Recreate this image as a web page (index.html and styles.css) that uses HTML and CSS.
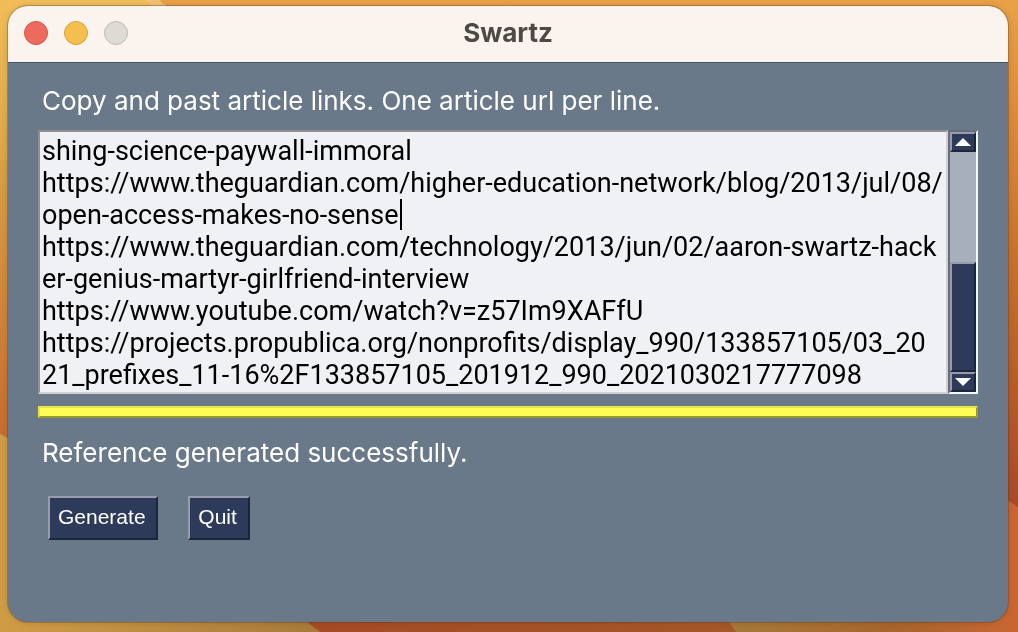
FILE: index.html
```html
<!DOCTYPE html>
<html lang="en">
<head>
<meta charset="utf-8">
<title>Swartz</title>
<link rel="stylesheet" href="styles.css">
</head>
<body>
<svg class="wallpaper" viewBox="0 0 1018 632" preserveAspectRatio="none" aria-hidden="true">
  <defs>
    <linearGradient id="gold" x1="0" y1="0" x2="0" y2="1"><stop offset="0" stop-color="#f2bd59"/><stop offset=".3" stop-color="#d9a044"/><stop offset="1" stop-color="#d29c45"/></linearGradient>
    <linearGradient id="amber" x1="0" y1="0" x2="0" y2="1"><stop offset="0" stop-color="#e9a146"/><stop offset=".4" stop-color="#c9722c"/><stop offset=".8" stop-color="#a84a27"/></linearGradient>
    <linearGradient id="dusk" x1="0" y1="0" x2="0" y2="1"><stop offset="0" stop-color="#d9a044"/><stop offset="1" stop-color="#c66a30"/></linearGradient>
    <linearGradient id="base" x1="0" y1="0" x2="1" y2="0"><stop offset="0" stop-color="#cf9c45"/><stop offset="1" stop-color="#a4773a"/></linearGradient>
    <linearGradient id="rust" x1="0" y1="0" x2="1" y2="0"><stop offset="0" stop-color="#a54b26"/><stop offset="1" stop-color="#a4602b"/></linearGradient>
    <linearGradient id="ember" gradientUnits="userSpaceOnUse" x1="720" y1="0" x2="1018" y2="0"><stop offset="0" stop-color="#a47a3a"/><stop offset=".6" stop-color="#a8642c"/><stop offset="1" stop-color="#c96633"/></linearGradient>
  </defs>
  <path fill="url(#gold)" d="M0 0H1018V632H0z"/>
  <path fill="url(#amber)" d="M160 0H1018V632H600z"/>
  <path fill="#f4c374" d="M145 0H158L170 8H155z"/>
  <path fill="url(#dusk)" d="M0 160H20V450L0 434z"/>
  <path fill="url(#base)" d="M0 434L20 444V610H340V632H0z"/>
  <path fill="url(#rust)" d="M302 618H1018V632H320z"/>
  <path fill="url(#ember)" d="M1000 495L1018 507V632H736L726 618H1000z"/>
</svg>
<main class="window">
  <header class="titlebar">
    <div class="lights">
      <button class="light close" aria-label="Close"></button>
      <button class="light minimize" aria-label="Minimize"></button>
      <button class="light zoom" aria-label="Zoom" disabled></button>
    </div>
    <h1 class="title">Swartz</h1>
  </header>
  <form class="content">
    <label class="label" for="links">Copy and past article links. One article url per line.</label>
    <div class="editor">
      <textarea class="links" id="links" rows="8" wrap="off" spellcheck="false">shing-science-paywall-immoral
https://www.theguardian.com/higher-education-network/blog/2013/jul/08/
open-access-makes-no-sense
https://www.theguardian.com/technology/2013/jun/02/aaron-swartz-hack
er-genius-martyr-girlfriend-interview
https://www.youtube.com/watch?v=z57Im9XAFfU
https://projects.propublica.org/nonprofits/display_990/133857105/03_20
21_prefixes_11-16%2F133857105_201912_990_2021030217777098</textarea>
      <span class="caret"></span>
      <div class="scrollbar">
        <button class="arrow" type="button" aria-label="Scroll up"><svg viewBox="0 0 16 8"><path fill="#fff" d="M8 0L16 8H0z"/></svg></button>
        <div class="track"></div>
        <div class="thumb"></div>
        <button class="arrow" type="button" aria-label="Scroll down"><svg viewBox="0 0 16 8"><path fill="#fff" d="M0 0H16L8 8z"/></svg></button>
      </div>
    </div>
    <div class="progress"></div>
    <p class="label status">Reference generated successfully.</p>
    <div class="actions">
      <button class="btn" type="button">Generate</button>
      <button class="btn" type="button">Quit</button>
    </div>
  </form>
</main>
</body>
</html>
```
FILE: styles.css
```css
* { box-sizing: border-box; }
body {
  margin: 0;
  min-height: 100vh;
  padding: 6px 10px 10px 8px;
  display: flex;
  background: #d29c45;
  font-family: Inter, "Liberation Sans", sans-serif;
}
.wallpaper { position: fixed; inset: 0; width: 100%; height: 100%; }
.window {
  position: relative;
  flex: 1;
  min-width: 0;
  display: flex;
  flex-direction: column;
  overflow: hidden;
  border-radius: 20px;
  background: #6a798a;
  box-shadow: 0 0 0 1px rgba(80, 50, 20, .3), 0 0 6px rgba(80, 40, 0, .2);
}
.titlebar {
  display: grid;
  grid-template-columns: 1fr auto 1fr;
  align-items: center;
  height: 57px;
  padding: 0 16px 2px;
  background: #fbf3ed;
  border-bottom: 1px solid #44566a;
}
.lights { display: flex; gap: 16px; }
.light { width: 24px; height: 24px; padding: 0; border: 1px solid; border-radius: 50%; }
.close { background: #ed6a5e; border-color: #d65548; }
.minimize { background: #f5bf4f; border-color: #d6a03c; }
.zoom { background: #dedad4; border-color: #bfbbb5; }
.title { margin: 0; font-size: 26px; line-height: 32px; font-weight: 700; color: #4d4945; }
.content { display: flex; flex-direction: column; padding: 22px 30px; }
.label { margin: 0; padding: 0 4px; font-size: 26px; line-height: 32px; color: #fff; }
.editor { position: relative; display: flex; margin-top: 13px; }
.links {
  flex: 1;
  min-width: 0;
  height: 264px;
  margin: 0;
  padding: 3px 2px;
  border: 2px solid;
  border-color: #8f8f91 #d0d0d4 #d0d0d4 #8f8f91;
  border-radius: 0;
  outline: 0;
  resize: none;
  overflow: hidden;
  background: #f0f1f5;
  color: #000;
  font: 27px/32px Roboto, "Liberation Sans", sans-serif;
}
.caret { position: absolute; left: 362px; top: 69px; width: 2px; height: 31px; background: #000; }
.scrollbar {
  width: 30px;
  display: flex;
  flex-direction: column;
  border: 2px solid;
  border-color: #6a6d78 #f0f8fa #f0f8fa #6a6d78;
  background: #a7b0ba;
}
.arrow, .thumb, .btn {
  background: #2d3a59;
  border: 2px solid;
  border-color: #969cac #1d2539 #1d2539 #969cac;
  border-radius: 0;
}
.arrow { display: flex; align-items: center; justify-content: center; height: 20px; padding: 0; }
.arrow svg { width: 16px; height: 8px; }
.track { flex: 1; }
.thumb { height: 110px; }
.progress {
  height: 12px;
  margin-top: 12px;
  background: #fffc54;
  border: 2px solid;
  border-color: #e5e24b #99972f #99972f #e5e24b;
}
.status { margin-top: 19px; }
.actions { display: flex; gap: 30px; padding: 27px 10px 0; }
.btn { min-width: 62px; height: 44px; padding: 0 10px 2px 8px; color: #fff; font: 21px/24px "Liberation Sans", Arial, sans-serif; }
```
